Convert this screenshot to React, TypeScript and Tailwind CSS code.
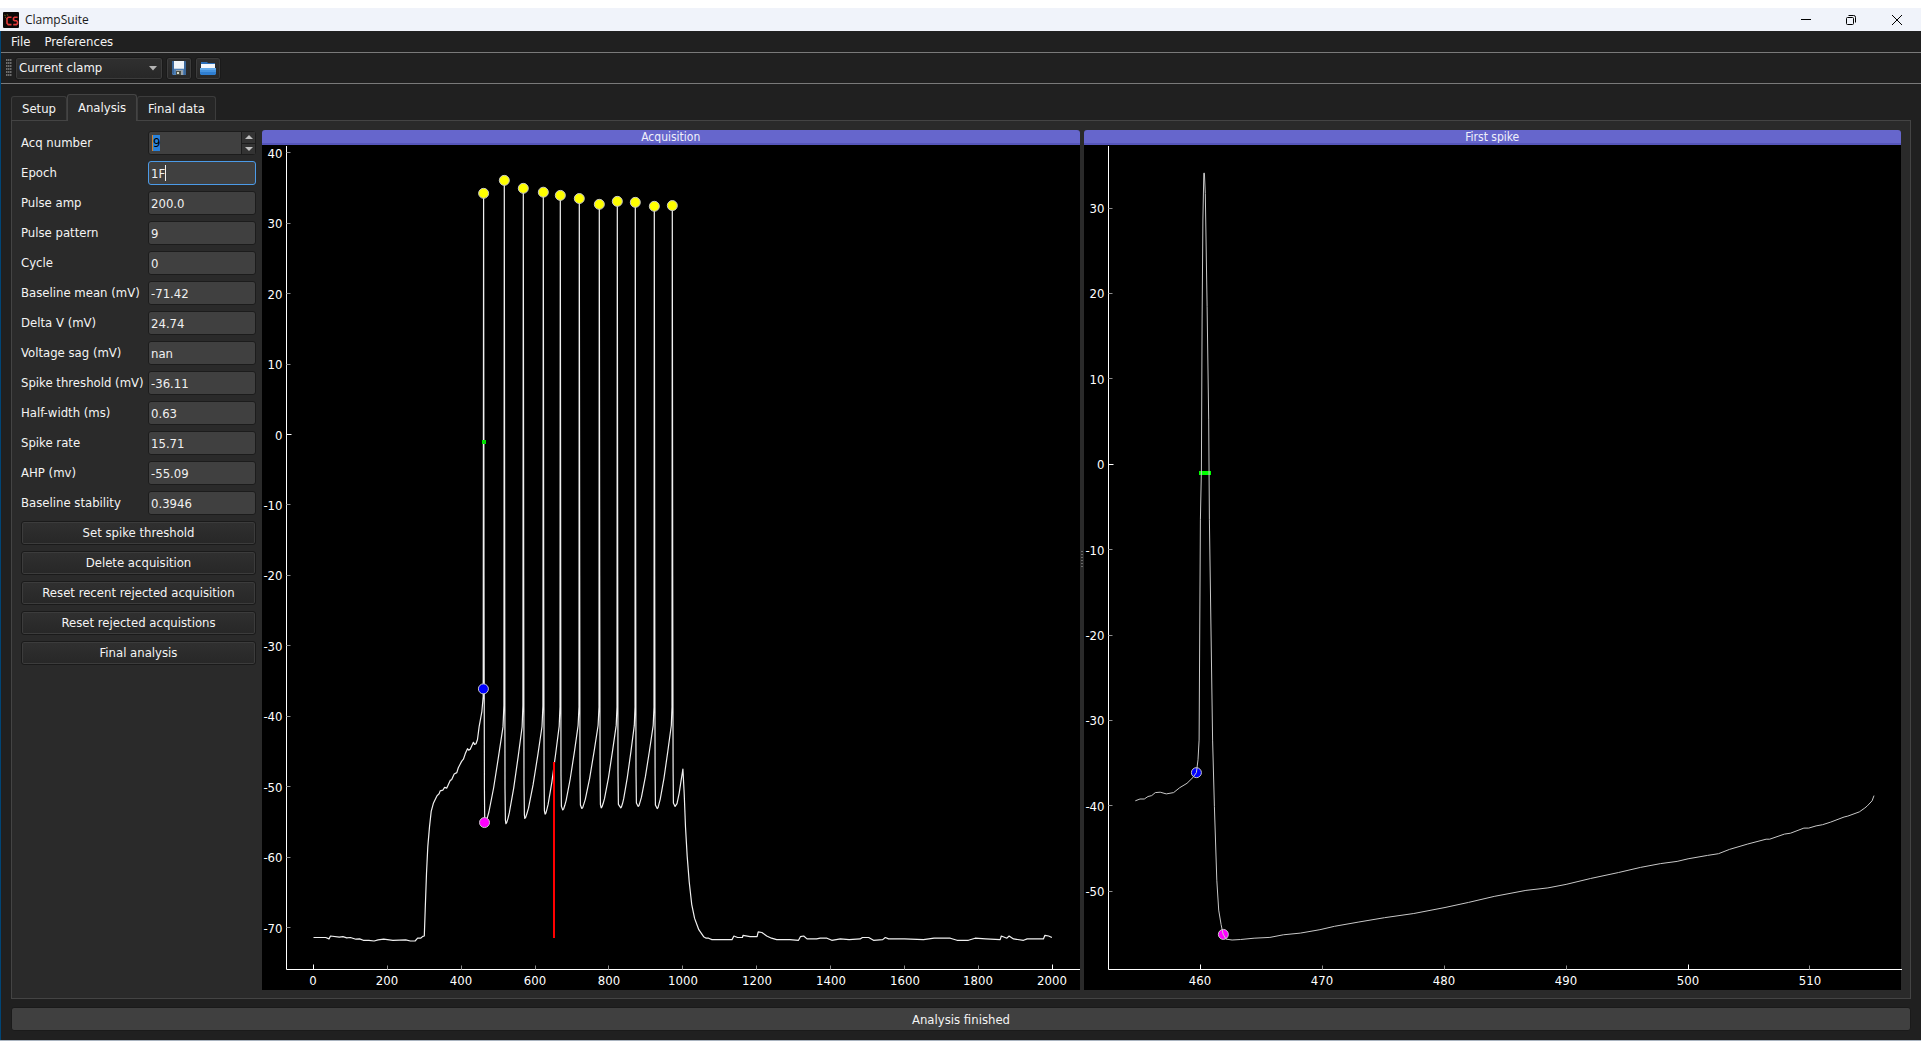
import { useEffect, useRef, useState } from "react";

type Point = [number, number];

type Marker = { x: number; y: number; fill: string };

type Bar = { from: Point; to: Point; color: string; width: number };

type PlotSpec = {
  title: string;
  xDomain: [number, number];
  yDomain: [number, number];
  xTicks: number[];
  yTicks: number[];
  xMajor: number[];
  axisWidth: number;
  trace: Point[];
  traceWidth: number;
  traceColor: string;
  markers: Marker[];
  bars: Bar[];
};

const FIELDS = [
  { id: "pulse-amp", label: "Pulse amp", value: "200.0" },
  { id: "pulse-pattern", label: "Pulse pattern", value: "9" },
  { id: "cycle", label: "Cycle", value: "0" },
  { id: "baseline-mean", label: "Baseline mean (mV)", value: "-71.42" },
  { id: "delta-v", label: "Delta V (mV)", value: "24.74" },
  { id: "voltage-sag", label: "Voltage sag (mV)", value: "nan" },
  { id: "spike-threshold", label: "Spike threshold (mV)", value: "-36.11" },
  { id: "half-width", label: "Half-width (ms)", value: "0.63" },
  { id: "spike-rate", label: "Spike rate", value: "15.71" },
  { id: "ahp", label: "AHP (mv)", value: "-55.09" },
  { id: "baseline-stability", label: "Baseline stability", value: "0.3946" },
];

const ACTIONS = [
  "Set spike threshold",
  "Delete acquisition",
  "Reset recent rejected acquisition",
  "Reset rejected acquistions",
  "Final analysis",
];

// spike peaks and the trough that follows each one, as [ms, mV]
const PEAKS: Point[] = [
  [460.6, 34.24], [516.6, 36.08], [568, 34.95], [622.2, 34.4],
  [668.2, 33.95], [719.6, 33.5], [773.8, 32.68], [822.5, 33.1],
  [871.2, 32.96], [922.7, 32.4], [971.4, 32.5],
];

const TROUGHS: Point[] = [
  [464.5, -55.1], [520.8, -55.25], [572, -54.5], [627, -53.9],
  [675, -53.3], [726.5, -53.1], [779, -53], [832, -53],
  [879, -52.8], [930.5, -53.1], [979, -52.8],
];

const ONSET: Point[] = [
  [0, -71.4], [33, -71.4], [42, -71.6], [46, -71.2], [70, -71.35],
  [80, -71.3], [90, -71.45], [100, -71.4], [115, -71.65], [125, -71.6],
  [135, -71.8], [150, -71.8], [164, -71.9], [175, -71.75], [190, -71.65],
  [215, -71.8], [250, -71.75], [262, -71.9], [275, -71.9], [282, -71.5],
  [290, -71.5], [296, -71.25], [300, -71.2], [302.5, -67.5], [306, -62.3],
  [309.5, -58.5], [314, -55.7], [318.6, -53.5], [325, -52.3], [334, -51.3],
  [340, -51], [343, -50.6], [350, -50.5], [355, -50.1], [361, -50.2],
  [370, -49.1], [374, -49], [381, -48.2], [388, -48], [392, -47.3],
  [401, -46.4], [406, -46.1], [411, -45.3], [417, -44.6], [420, -44.8],
  [424, -44.7], [433, -43.7], [436, -44], [440, -43.9], [444, -43.3],
  [448.5, -41.5], [456, -39.3], [459.4, -37.2],
];

const DECAY: Point[] = [
  [984, -52.4], [990, -50.9], [995, -49.2], [1000, -47.5], [1003.6, -51],
  [1007, -55.7], [1011.7, -59.9], [1017, -63.5], [1024, -66.7], [1031.6, -68.7],
  [1043, -70.3], [1056, -71.3], [1063, -71.5], [1069.5, -71.5], [1078.5, -71.7],
  [1100, -71.7], [1133, -71.7], [1138, -71.2], [1148, -71.4], [1161, -71.4],
  [1163, -71.1], [1182, -71.3], [1201, -71.3], [1204, -70.6], [1214, -70.7],
  [1227, -71.2], [1240, -71.5], [1254, -71.7], [1290, -71.7], [1313, -71.8],
  [1318, -71.3], [1327, -71.2], [1336, -71.6], [1362, -71.6], [1372, -71.5],
  [1390, -71.5], [1403, -71.8], [1415, -71.7], [1426, -71.6], [1450, -71.7],
  [1480, -71.6], [1486, -71.4], [1503, -71.4], [1516, -71.8], [1541, -71.7],
  [1548, -71.4], [1557, -71.6], [1600, -71.6], [1651, -71.7], [1680, -71.5],
  [1724, -71.5], [1742, -71.8], [1773, -71.8], [1791, -71.5], [1820, -71.6],
  [1859, -71.7], [1862, -71.2], [1877, -71.5], [1883, -71.2], [1895, -71.6],
  [1922, -71.8], [1932, -71.6], [1976, -71.6], [1980, -71.1], [1990, -71.2],
  [1999, -71.4],
];

// shape of the ramp between a trough and the next spike: [time, height]
const RAMP: Point[] = [
  [0.05, 0.01], [0.12, 0.05], [0.2, 0.1], [0.45, 0.33], [0.7, 0.62],
  [0.93, 0.9], [0.98, 1.1],
];

function buildAcquisition(): Point[] {
  const points = [...ONSET];
  PEAKS.forEach(([px, py], i) => {
    const [tx, ty] = TROUGHS[i];
    points.push([px, py], [px + 1, -20], [px + 2, ty + 5], [px + 3, ty + 0.5], [tx, ty]);
    const next = PEAKS[i + 1];
    if (next) {
      RAMP.forEach(([f, h]) => {
        points.push([tx + f * (next[0] - tx), ty + h * (-40 - ty)]);
      });
    }
  });
  return [...points, ...DECAY];
}

const FIRST_SPIKE: Point[] = [
  [454.66, -39.4], [455.04, -39.2], [455.4, -39.2], [455.7, -38.9],
  [456, -38.8], [456.3, -38.45], [456.7, -38.4], [457.2, -38.6],
  [457.8, -38.45], [458.3, -37.87], [458.9, -37.36], [459.4, -36.65],
  [459.67, -36.1], [459.8, -34.6], [459.89, -32.3], [460, -6.5],
  [460.08, -0.67], [460.14, 16.9], [460.2, 28.6], [460.28, 34.1],
  [460.33, 34.1], [460.4, 31.7], [460.55, 18.5], [460.68, 5.2],
  [460.74, -6.5], [461, -32.3], [461.15, -40.1], [461.34, -48.7],
  [461.5, -52.2], [461.7, -53.9], [461.86, -55], [462.1, -55.6],
  [462.6, -55.7], [463.3, -55.65], [464.4, -55.5], [465.7, -55.4],
  [466.8, -55.1], [468.2, -54.9], [469.8, -54.5], [471, -54.1],
  [473, -53.6], [475.1, -53.1], [477.5, -52.6], [480.06, -51.9],
  [482, -51.3], [484.1, -50.6], [486.7, -49.9], [488.5, -49.6],
  [490, -49.2], [492, -48.5], [494.3, -47.8], [496.1, -47.2],
  [497.75, -46.76], [499.1, -46.5], [500, -46.2], [501.6, -45.8],
  [502.5, -45.6], [503.4, -45.1], [504.9, -44.46], [506.4, -43.9],
  [506.7, -43.9], [507.9, -43.3], [508.4, -43.2], [509.5, -42.6],
  [509.9, -42.6], [510.5, -42.35], [511.04, -42.2], [511.7, -41.9],
  [512.8, -41.3], [513.1, -41.2], [514.05, -40.7], [514.5, -40.25],
  [514.7, -40], [515.1, -39.4], [515.25, -38.8],
];

const ACQUISITION_PLOT: PlotSpec = {
  title: "Acquisition",
  xDomain: [-73, 2075],
  yDomain: [-75.95, 40.96],
  xTicks: [0, 200, 400, 600, 800, 1000, 1200, 1400, 1600, 1800, 2000],
  yTicks: [40, 30, 20, 10, 0, -10, -20, -30, -40, -50, -60, -70],
  xMajor: [0, 2000],
  axisWidth: 24,
  trace: buildAcquisition(),
  traceWidth: 1.2,
  traceColor: "#f0f0f0",
  markers: [
    ...PEAKS.map(([x, y]) => ({ x, y, fill: "#ffff00" })),
    { x: 460, y: -36.11, fill: "#0000ff" },
    { x: 463, y: -55.09, fill: "#ff00ff" },
  ],
  bars: [
    { from: [651, -46.5], to: [651, -71.5], color: "#ff0000", width: 2 },
    { from: [456, -1], to: [467, -1], color: "#00e000", width: 4 },
  ],
};

const FIRST_SPIKE_PLOT: PlotSpec = {
  title: "First spike",
  xDomain: [452.46, 517.55],
  yDomain: [-59.16, 37.27],
  xTicks: [460, 470, 480, 490, 500, 510],
  yTicks: [30, 20, 10, 0, -10, -20, -30, -40, -50],
  xMajor: [460, 500],
  axisWidth: 24,
  trace: FIRST_SPIKE,
  traceWidth: 1,
  traceColor: "#c8c8c8",
  markers: [
    { x: 459.67, y: -36.11, fill: "#0000ff" },
    { x: 461.88, y: -55.05, fill: "#ff00ff" },
  ],
  bars: [{ from: [459.9, -1], to: [460.87, -1], color: "#00ff00", width: 4 }],
};

function Plot({ spec, markersOnTop }: { spec: PlotSpec; markersOnTop: boolean }) {
  const ref = useRef<HTMLDivElement>(null);
  const [size, setSize] = useState({ w: 0, h: 0 });

  useEffect(() => {
    const el = ref.current;
    if (!el) return;
    const measure = () => setSize({ w: el.clientWidth, h: el.clientHeight });
    measure();
    const observer = new ResizeObserver(measure);
    observer.observe(el);
    return () => observer.disconnect();
  }, []);

  const left = spec.axisWidth + 0.5;
  const top = 1;
  const bottom = size.h - 20.5;
  const sx = (x: number) =>
    left + ((x - spec.xDomain[0]) / (spec.xDomain[1] - spec.xDomain[0])) * (size.w - left);
  const sy = (y: number) =>
    bottom - ((y - spec.yDomain[0]) / (spec.yDomain[1] - spec.yDomain[0])) * (bottom - top);
  const snap = (v: number) => Math.floor(v) + 0.5;

  const trace = (
    <polyline
      points={spec.trace.map(([x, y]) => `${sx(x).toFixed(1)},${sy(y).toFixed(1)}`).join(" ")}
      fill="none"
      stroke={spec.traceColor}
      strokeWidth={spec.traceWidth}
      strokeLinejoin="round"
    />
  );

  return (
    <section className="flex min-w-0 flex-1 flex-col">
      <h2 className="h-[15px] overflow-hidden rounded-t-[3px] border-b-2 border-[#5555bb] bg-[#6666cc] text-center text-[12px] leading-[15px] text-[#f0f0fa]">
        {spec.title}
      </h2>
      <div ref={ref} className="relative min-h-0 flex-1 bg-black">
        {size.w > 0 && (
          <svg
            className="absolute inset-0"
            width={size.w}
            height={size.h}
            role="img"
            aria-label={spec.title}
          >
            {!markersOnTop && <Markers spec={spec} sx={sx} sy={sy} />}
            {trace}
            {markersOnTop && <Markers spec={spec} sx={sx} sy={sy} />}
            <path
              d={`M${left} ${top}V${bottom}H${size.w}`}
              fill="none"
              stroke="#ffffff"
              strokeWidth="1"
            />
            {spec.yTicks.map((v) => (
              <g key={v}>
                <line
                  x1={left}
                  x2={left + (v === 0 ? 5 : 4)}
                  y1={snap(sy(v))}
                  y2={snap(sy(v))}
                  stroke={v === 0 ? "#ffffff" : "#8c8c8c"}
                />
                <text x={left - 4} y={Math.round(sy(v)) + 5} textAnchor="end" fill="#ffffff">
                  {v}
                </text>
              </g>
            ))}
            {spec.xTicks.map((v) => {
              const major = spec.xMajor.includes(v);
              return (
                <g key={v}>
                  <line
                    x1={snap(sx(v))}
                    x2={snap(sx(v))}
                    y1={bottom}
                    y2={bottom - (major ? 5 : 4)}
                    stroke={major ? "#ffffff" : "#8c8c8c"}
                  />
                  <text x={Math.round(sx(v))} y={bottom + 15} textAnchor="middle" fill="#ffffff">
                    {v}
                  </text>
                </g>
              );
            })}
          </svg>
        )}
      </div>
    </section>
  );
}

function Markers({
  spec,
  sx,
  sy,
}: {
  spec: PlotSpec;
  sx: (x: number) => number;
  sy: (y: number) => number;
}) {
  return (
    <g>
      {spec.bars.map((b, i) => (
        <line
          key={i}
          x1={Math.round(sx(b.from[0]))}
          y1={Math.round(sy(b.from[1]))}
          x2={Math.round(sx(b.to[0]))}
          y2={Math.round(sy(b.to[1]))}
          stroke={b.color}
          strokeWidth={b.width}
        />
      ))}
      {spec.markers.map((m, i) => (
        <circle key={i} cx={sx(m.x)} cy={sy(m.y)} r="5" fill={m.fill} stroke="#c8c8c8" />
      ))}
    </g>
  );
}

function AppLogo() {
  return (
    <svg width="16" height="16" viewBox="0 0 16 16" aria-hidden="true">
      <rect width="16" height="16" rx="1" fill="#0b0808" />
      <path d="M1 3l2 1M2 5l2 2M4 2l1 2" stroke="#7a6a20" strokeWidth="0.7" />
      <path
        d="M8.5 5.2H5.2L4 6.6v4.6l1.2 1.4h3.3"
        fill="none"
        stroke="#e23a3a"
        strokeWidth="1.6"
      />
      <path
        d="M14.6 5.2h-3l-1.1 1v1.6l1 1h2l1 1v1.8l-1.1 1h-3.2"
        fill="none"
        stroke="#e23a3a"
        strokeWidth="1.6"
      />
    </svg>
  );
}

function SaveIcon() {
  return (
    <svg width="16" height="16" viewBox="0 0 16 16" aria-hidden="true">
      <path d="M1 1h13l1 1v13H2l-1-1z" fill="#4f7fb5" />
      <path d="M1 1h2v13H2l-1-1zM13 1h1l1 1v13h-2z" fill="#3c6799" />
      <path d="M3 1h10v8H3z" fill="#f0f4f9" />
      <path d="M3 8h10v1H3z" fill="#c4d2e2" />
      <path d="M5 10h7v5H5z" fill="#9aa3ab" />
      <path d="M5 11h5v4H5z" fill="#4b4f45" />
      <path d="M6 12h2v2H6z" fill="#d8d8c8" />
    </svg>
  );
}

function FolderIcon() {
  return (
    <svg width="16" height="16" viewBox="0 0 16 16" aria-hidden="true">
      <path d="M1 2h6l1 1h7v4H1z" fill="#2c6fb8" />
      <path d="M1 4h14v4H1z" fill="#f4f8fc" />
      <path d="M0 8h16v6l-1 1H1l-1-1z" fill="#2f7ed0" />
      <path d="M0 8h16v2H0z" fill="#63aaea" />
      <path d="M0 10h16v2H0z" fill="#4694e0" />
    </svg>
  );
}

const BUTTON =
  "rounded-[3px] border border-[#1a1a1a] bg-linear-to-b from-[#303030] to-[#272727] shadow-[inset_0_0_0_1px_#3c3c3c]";

const INPUT =
  "h-6 w-[108px] rounded-[3px] border border-[#1c1c1c] bg-[#404040] px-[2px] text-[#f0f0f0] outline-none";

export default function App() {
  return (
    <div className="flex min-h-screen flex-col border-b border-[#aab4c0] bg-[#202020] text-[13px] leading-4 text-[#f4f4f4] [font-family:Tahoma,'DejaVu_Sans_Condensed','DejaVu_Sans',sans-serif]">
      <div className="h-2 bg-white" />
      <header className="flex h-[23px] items-center bg-[#f0f3fa] pl-[3px] text-[#1a1a1a]">
        <AppLogo />
        <h1 className="ml-[6px] flex-1 text-[12px] [font-family:'Open_Sans',sans-serif]">
          ClampSuite
        </h1>
        <div className="flex h-full items-center">
          <button aria-label="Minimize" className="flex h-full w-[45px] items-center justify-center">
            <svg width="10" height="10" viewBox="0 0 10 10">
              <path d="M0 4.5h10" stroke="#000000" />
            </svg>
          </button>
          <button aria-label="Restore" className="flex h-full w-[45px] items-center justify-center">
            <svg width="10" height="10" viewBox="0 0 10 10" fill="none" stroke="#000000">
              <rect x="0.5" y="2.5" width="7" height="7" rx="1" />
              <path d="M2.5 0.5h5.2q1.8 0 1.8 1.8v5.2" />
            </svg>
          </button>
          <button aria-label="Close" className="flex h-full w-12 items-center justify-center">
            <svg width="10" height="10" viewBox="0 0 10 10">
              <path d="M0 0l10 10M10 0L0 10" stroke="#000000" />
            </svg>
          </button>
        </div>
      </header>

      <div className="flex flex-1 flex-col border-l border-[#004576]">
        <nav className="flex h-[22px] items-center gap-[14px] border-b border-[#7a7a7a] pl-[10px]">
          <button>File</button>
          <button>Preferences</button>
        </nav>

        <div className="flex h-[31px] items-center border-b border-[#7a7a7a] pl-[5px]">
          <svg width="6" height="18" viewBox="0 0 6 18" aria-hidden="true">
            {[0, 3, 6, 9, 12, 15].map((y) => (
              <path key={y} d={`M0 ${y + 1}h1.5M2 ${y + 1}h1.5M4 ${y + 1}h1.5`} stroke="#6c6c6c" strokeWidth="2" />
            ))}
          </svg>
          <div className="relative ml-[3px] flex">
            <select
              aria-label="Recording mode"
              className={`${BUTTON} h-[23px] w-[148px] appearance-none pl-[3px] outline-none`}
            >
              <option>Current clamp</option>
            </select>
            <svg
              className="pointer-events-none absolute right-[6px] top-[9px]"
              width="8"
              height="5"
              viewBox="0 0 8 5"
            >
              <path d="M0 0h8L4 4.500z" fill="#b4b4b4" />
            </svg>
          </div>
          <button aria-label="Save" className={`${BUTTON} ml-[3px] flex h-[23px] w-[26px] items-center justify-center`}>
            <SaveIcon />
          </button>
          <button aria-label="Open" className={`${BUTTON} ml-[3px] flex h-[23px] w-[26px] items-center justify-center`}>
            <FolderIcon />
          </button>
        </div>

        <main className="flex flex-1 flex-col px-[10px] pb-[9px] pt-[10px]">
          <div role="tablist" className="flex items-end">
            <button
              role="tab"
              aria-selected="false"
              className="h-6 w-[56px] rounded-t-[3px] border border-b-0 border-[#3c3c3c] bg-[#262626] text-center"
            >
              Setup
            </button>
            <button
              role="tab"
              aria-selected="true"
              className="relative -mb-px h-[27px] w-[70px] rounded-t-[3px] border border-b-0 border-[#444444] bg-[#2a2a2a] text-center"
            >
              Analysis
            </button>
            <button
              role="tab"
              aria-selected="false"
              className="h-6 w-[79px] rounded-t-[3px] border border-b-0 border-[#3c3c3c] bg-[#262626] text-center"
            >
              Final data
            </button>
          </div>

          <div className="flex flex-1 gap-[6px] border border-[#444444] bg-[#2a2a2a] px-[9px] pb-2 pt-[9px]">
            <form className="flex w-[235px] shrink-0 flex-col gap-[6px] pt-px">
              <div className="flex h-6 items-center justify-between">
                <label htmlFor="acq-number">Acq number</label>
                <div className="relative flex">
                  <input
                    id="acq-number"
                    defaultValue="9"
                    className={`${INPUT} pl-[4px] text-transparent`}
                  />
                  <span className="pointer-events-none absolute left-[4px] top-1 border-l border-[#d08030] bg-[#2a82da] text-black">
                    9
                  </span>
                  <div className="absolute bottom-px right-px top-px flex w-[14px] flex-col border-l border-[#1c1c1c]">
                    <button type="button" aria-label="Increase" className="flex flex-1 items-center justify-center border-b border-[#1c1c1c] bg-[#333333]">
                      <svg width="8" height="4" viewBox="0 0 8 4">
                        <path d="M4 0l4 4H0z" fill="#c0c0c0" />
                      </svg>
                    </button>
                    <button type="button" aria-label="Decrease" className="flex flex-1 items-center justify-center bg-[#333333]">
                      <svg width="8" height="4" viewBox="0 0 8 4">
                        <path d="M4 4l4-4H0z" fill="#c0c0c0" />
                      </svg>
                    </button>
                  </div>
                </div>
              </div>
              <div className="flex h-6 items-center justify-between">
                <label htmlFor="epoch">Epoch</label>
                <div className="relative flex">
                  <input
                    id="epoch"
                    defaultValue="1F"
                    className="h-6 w-[108px] rounded-[3px] border border-[#4c9be8] bg-[#404040] px-[2px] text-[#f0f0f0] outline-none"
                  />
                  <span className="pointer-events-none absolute left-[17px] top-1 h-4 w-px bg-[#f0f0f0]" />
                </div>
              </div>
              {FIELDS.map((f) => (
                <div key={f.id} className="flex h-6 items-center justify-between">
                  <label htmlFor={f.id} className="whitespace-nowrap">
                    {f.label}
                  </label>
                  <input id={f.id} defaultValue={f.value} className={INPUT} />
                </div>
              ))}
              {ACTIONS.map((label) => (
                <button key={label} type="button" className={`${BUTTON} h-6 whitespace-nowrap`}>
                  {label}
                </button>
              ))}
            </form>

            <div className="flex min-w-0 flex-1">
              <Plot spec={ACQUISITION_PLOT} markersOnTop />
              <div className="flex w-1 items-center justify-center">
                <svg width="2" height="18" viewBox="0 0 2 18" aria-hidden="true">
                  <path d="M1 0v18" stroke="#6a6a6a" strokeWidth="2" strokeDasharray="1 2" />
                </svg>
              </div>
              <Plot spec={FIRST_SPIKE_PLOT} markersOnTop={false} />
            </div>
          </div>

          <div role="status" className="mt-2 h-6 rounded-[3px] border border-[#1a1a1a] bg-[#404040] text-center leading-6">
            Analysis finished
          </div>
        </main>
      </div>
    </div>
  );
}
